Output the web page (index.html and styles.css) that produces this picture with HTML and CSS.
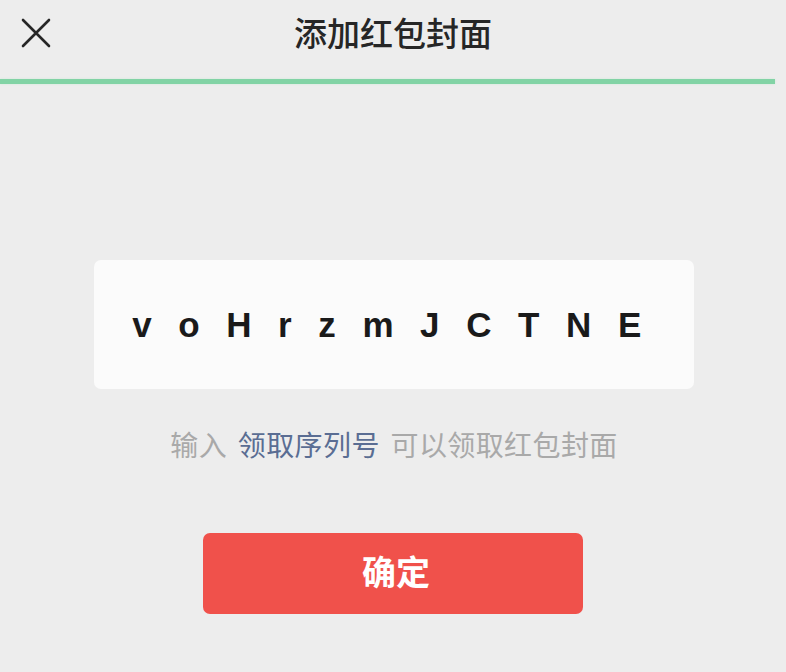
FILE: index.html
```html
<!DOCTYPE html>
<html lang="zh-CN">
<head>
<meta charset="utf-8">
<title>添加红包封面</title>
<link rel="stylesheet" href="styles.css">
</head>
<body>
<div class="page">
  <header class="topbar">
    <div class="close">
      <svg width="30" height="30" viewBox="0 0 30 30"><path d="M2 2 L28 28 M28 2 L2 28" stroke="#262626" stroke-width="2.6" stroke-linecap="round" fill="none"/></svg>
    </div>
    <h1 class="title">添加红包封面</h1>
    <div></div>
  </header>
  <div class="progress"></div>
  <main class="content">
    <div class="codebox"><span class="code">voHrzmJCTNE</span></div>
    <p class="hint">输入 <span class="link">领取序列号</span> 可以领取红包封面</p>
    <button class="confirm">确定</button>
  </main>
</div>
</body>
</html>
```
FILE: styles.css
```css
html, body {
  margin: 0;
  padding: 0;
  background: #ededed;
}
body {
  font-family: "Noto Sans CJK SC", "Noto Sans", sans-serif;
  width: 786px;
  height: 672px;
  overflow: hidden;
}
.page {
  display: flex;
  flex-direction: column;
}
.topbar {
  height: 70px;
  display: grid;
  grid-template-columns: 1fr auto 1fr;
  align-items: center;
  padding-left: 21px;
}
.close {
  display: flex;
  align-items: center;
  margin-top: -4px;
}
.title {
  margin: 0 0 6px;
  font-size: 33px;
  font-weight: 500;
  color: #262626;
  line-height: 40px;
  padding-right: 21px;
}
.progress {
  margin-top: 9px;
  width: 775px;
  height: 5px;
  background: #82d3a5;
  box-shadow: 0 0 2px #c8ecd6;
}
.content {
  display: flex;
  flex-direction: column;
  align-items: center;
  padding-left: 2px;
}
.codebox {
  margin-top: 176px;
  width: 600px;
  height: 129px;
  background: #fbfbfb;
  border-radius: 7px;
  display: flex;
  align-items: center;
  justify-content: center;
}
.code {
  font-family: "Liberation Sans", Arial, sans-serif;
  font-weight: bold;
  font-size: 35px;
  letter-spacing: 26.6px;
  color: #1a1a1a;
  margin-right: -12px;
  margin-top: 0;
}
.hint {
  margin: 35px 0 0;
  line-height: 40px;
  font-size: 28px;
  letter-spacing: 0.4px;
  color: #a9a9a9;
  word-spacing: 4px;
}
.link {
  color: #5a6d93;
}
.confirm {
  margin-top: 69px;
  width: 380px;
  height: 81px;
  border: none;
  border-radius: 7px;
  background: #f0514b;
  color: #ffffff;
  font-family: "Noto Sans CJK SC", sans-serif;
  font-size: 34px;
  font-weight: bold;
  padding: 0 0 6px 6px;
  margin-left: -2px;
}
```
